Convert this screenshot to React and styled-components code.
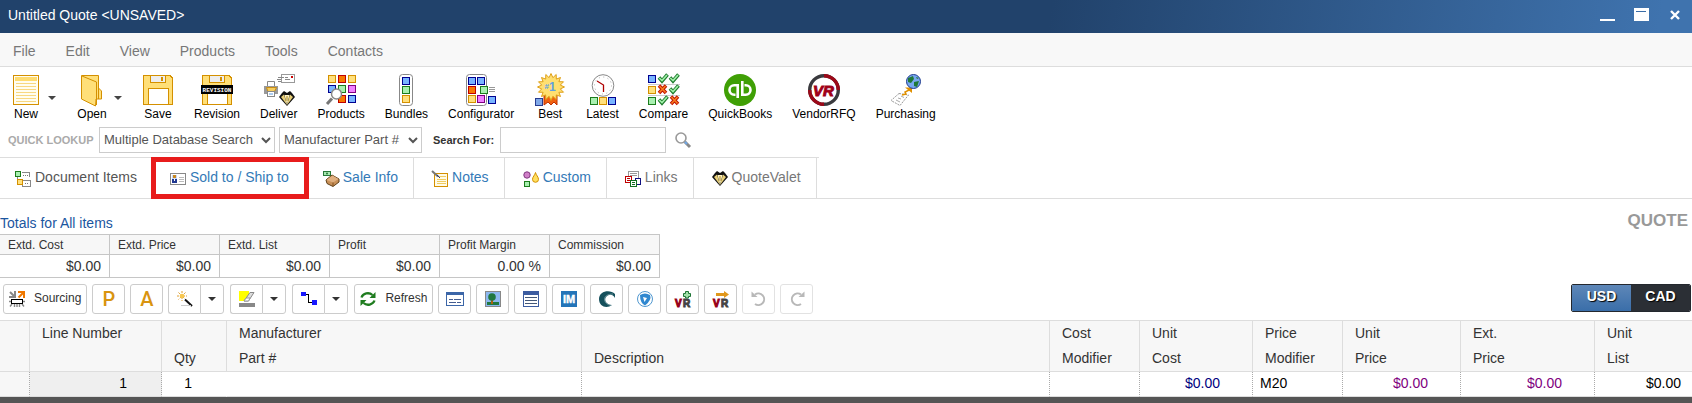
import React from "react";
import styled, { createGlobalStyle, css } from "styled-components";

const GlobalStyle = createGlobalStyle`
  * { box-sizing: border-box; }
  body {
    margin: 0;
    background: #fff;
    color: #333;
    font-family: "Liberation Sans", Arial, sans-serif;
    font-size: 14px;
    overflow-x: hidden;
  }
  button, input, select { font-family: inherit; }
  svg { display: block; flex: none; overflow: visible; }
`;

/* ---------- layout ---------- */

const plainButton = css`
  border: 0;
  padding: 0;
  margin: 0;
  background: none;
  color: inherit;
  cursor: pointer;
`;

const TitleBar = styled.header`
  display: flex;
  align-items: center;
  justify-content: space-between;
  height: 33px;
  padding: 0 10px 4px 8px;
  color: #fff;
  background: linear-gradient(100deg, #21426b 62%, #3f73ae 98%);
`;

const Title = styled.h1`
  margin: 0;
  font-size: 14px;
  font-weight: 400;
  line-height: 20px;
`;

const WindowControls = styled.div`
  display: flex;
  gap: 18px;
`;

const WindowButton = styled.button`
  ${plainButton}
  display: block;
`;

const MenuBar = styled.nav`
  display: flex;
  gap: 30px;
  height: 34px;
  padding: 0 13px;
  background: #f8f8f8;
  border-bottom: 1px solid #ddd;
`;

const MenuItem = styled.button`
  ${plainButton}
  padding-top: 2px;
  color: #777;
  font-size: 14px;
  line-height: 20px;
`;

const Toolbar = styled.div`
  display: flex;
  gap: 20px;
  padding: 7px 10px 0;
`;

const ToolGroup = styled.div`
  display: flex;
  align-items: center;
`;

const ToolButton = styled.button`
  ${plainButton}
  display: flex;
  flex-direction: column;
  align-items: center;
  color: #000;
  font-size: 12px;
  line-height: 16px;
`;

const CaretButton = styled.button`
  ${plainButton}
  padding: 0 0 0 6px;
`;

const LookupBar = styled.form`
  display: flex;
  align-items: center;
  padding: 5px 8px 4px;
`;

const LookupTitle = styled.span`
  width: 91px;
  color: #aaa;
  font-size: 11px;
  font-weight: 700;
  white-space: nowrap;
`;

const Select = styled.select`
  width: ${(p) => p.$width}px;
  height: 26px;
  margin-right: 4px;
  padding: 0 0 2px;
  border: 1px solid #ccc;
  border-radius: 0;
  background-color: #fff;
  color: #555;
  font-size: 13px;
`;

const SearchLabel = styled.label`
  margin: 0 6px 0 7px;
  color: #333;
  font-size: 11px;
  font-weight: 700;
`;

const SearchInput = styled.input`
  width: 166px;
  height: 26px;
  border: 1px solid #ccc;
  font-size: 13px;
`;

const SearchButton = styled.button`
  ${plainButton}
  margin-left: 9px;
`;

const TabStrip = styled.div`
  border-bottom: 1px solid #ddd;
`;

const TabList = styled.div`
  display: inline-flex;
  vertical-align: top;
  padding-right: 2px;
  border-top: 1px solid #ddd;
`;

const Tab = styled.button`
  ${plainButton}
  position: relative;
  display: flex;
  align-items: flex-end;
  gap: 4px;
  padding: 9px ${(p) => (p.$first ? 14 : 15)}px 11px ${(p) => (p.$first ? 15 : 18)}px;
  border-right: 1px solid #ddd;
  color: ${(p) => p.$color};
  font-size: 14px;
  line-height: 20px;
  ${(p) =>
    p.$marked &&
    css`
      &::after {
        content: "";
        position: absolute;
        inset: -1px -5px -1px -1px;
        border: 5px solid #e81c1c;
        z-index: 1;
      }
    `}
`;

const Summary = styled.section`
  display: flex;
  justify-content: space-between;
  align-items: flex-start;
  padding-right: 4px;
`;

const TotalsTitle = styled.h2`
  margin: 0;
  padding: 14px 0 1px;
  color: #1b569f;
  font-size: 14px;
  font-weight: 400;
  line-height: 20px;
`;

const DocumentType = styled.strong`
  padding-top: 12px;
  color: #999;
  font-size: 17px;
  line-height: 20px;
`;

const TotalsTable = styled.table`
  border-collapse: separate;
  border-spacing: 0;
  border-top: 1px solid #c6c6c6;
  th, td {
    width: 110px;
    border-right: 1px solid #c6c6c6;
    border-bottom: 1px solid #c6c6c6;
  }
  th {
    padding: 0 8px;
    height: 20px;
    background: #f7f7f7;
    text-align: left;
    font-size: 12px;
    font-weight: 400;
  }
  td {
    padding: 0 8px;
    height: 23px;
    text-align: right;
  }
`;

const ActionBar = styled.div`
  display: flex;
  justify-content: space-between;
  padding: 6px 1px 6px 3px;
`;

const Actions = styled.div`
  display: flex;
  gap: 5px;
`;

const ActionButton = styled.button`
  display: flex;
  align-items: center;
  justify-content: center;
  gap: ${(p) => (p.$labelled ? 9 : 0)}px;
  min-width: 33px;
  height: 30px;
  padding: 0 5px;
  border: 1px solid #ccc;
  border-radius: 3px;
  background: #fff;
  color: #333;
  font-size: 12px;
  line-height: 16px;
  cursor: pointer;
  &:disabled { border-color: #e2e2e2; cursor: default; }
`;

const ActionLabel = styled.span`
  padding-bottom: 2px;
`;

const LetterIcon = styled.span`
  color: #d9940f;
  font: 500 20px/20px Roboto, sans-serif;
`;

const SplitButton = styled.div`
  display: flex;
  margin-right: 1px;
  ${ActionButton}:first-child { border-radius: 3px 0 0 3px; border-right: 0; min-width: 32px; }
  ${ActionButton}:last-child { border-radius: 0 3px 3px 0; min-width: 24px; }
`;

const CurrencySwitch = styled.div`
  display: flex;
  width: 120px;
  height: 28px;
  border: 1px solid #24282e;
  border-radius: 2px;
  overflow: hidden;
`;

const CurrencyButton = styled.button`
  ${plainButton}
  flex: 1;
  padding-bottom: 4px;
  background: ${(p) => (p.$active ? "linear-gradient(#5e87b8, #3a6ea9)" : "#2b2f35")};
  color: #fff;
  font-size: 14px;
  font-weight: 700;
  text-shadow: 1px 1px 1px #000;
`;

const ItemsTable = styled.table`
  width: 100%;
  table-layout: fixed;
  border-collapse: separate;
  border-spacing: 0;
  border-top: 1px solid #ddd;
`;

const HeadCell = styled.th`
  height: 50px;
  padding: 0 12px;
  vertical-align: bottom;
  border-right: 1px solid #ddd;
  border-bottom: 1px solid #ddd;
  background: #f7f7f7;
  text-align: left;
  font-weight: 400;
  line-height: 25px;
  white-space: nowrap;
  ${(p) => p.$top && "vertical-align: top;"}
  &:last-child { border-right: 0; }
`;

const Cell = styled.td`
  height: 25px;
  padding: 0 ${(p) => p.$pad ?? 32}px 2px 7px;
  border-right: 1px ${(p) => (p.$open ? "solid transparent" : "dotted #aaa")};
  border-bottom: 1px solid #ddd;
  background: ${(p) => p.$bg || "#fff"};
  color: ${(p) => p.$color || "#000"};
  text-align: ${(p) => (p.$left ? "left" : "right")};
  line-height: 20px;
  &:last-child { border-right: 0; }
`;

const Footer = styled.footer`
  height: 7px;
  background: #555;
`;

/* ---------- icons ---------- */

const Svg = ({ w = 32, h = w, crisp = true, children }) => (
  <svg
    width={w}
    height={h}
    viewBox={`0 0 ${w} ${h}`}
    shapeRendering={crisp ? "crispEdges" : "auto"}
    aria-hidden="true"
  >
    {children}
  </svg>
);

const TONES = {
  yellow: ["#d49000", "#ffe07c"],
  orange: ["#c00000", "#f87800"],
  blue: ["#000090", "#78b4ff"],
  green: ["#1c7c1c", "#a8f0b0"],
  pink: ["#800080", "#f080ff"],
};

const Square = ({ x, y, tone, s = 8 }) => (
  <g shapeRendering="crispEdges">
    <rect x={x} y={y} width={s} height={s} fill={TONES[tone][0]} />
    <rect x={x + 1} y={y + 1} width={s - 2} height={s - 2} fill={TONES[tone][1]} />
  </g>
);

const Caret = ({ color = "#444" }) => (
  <Svg w={8} h={4} crisp={false}>
    <path d="M0 0H8L4 4Z" fill={color} />
  </Svg>
);

const NewIcon = () => (
  <Svg>
    <rect x="3.5" y="1.5" width="25" height="29" fill="#fffdf0" stroke="#d49000" />
    <path d="M5 3h22v4H5z" fill="#ffdc70" />
    <path d="M6 9.5h20M6 12.5h20M6 15.5h20M6 18.5h20M6 21.5h20M6 24.5h20M6 27.5h20" stroke="#f8d880" />
  </Svg>
);

const OpenIcon = () => (
  <Svg crisp={false}>
    <path d="M5.5 1.5H22.5V14L25.5 17V25H20L19.5 32L5.5 25Z" fill="#ffdf78" stroke="#d49000" />
    <path d="M6 2L20.500 8V31" fill="none" stroke="#d49000" />
    <path d="M22.500 14V25" stroke="#d49000" />
  </Svg>
);

const Floppy = () => (
  <>
    <path d="M1.500 1.500H28L30.500 4V30.500H1.500Z" fill="#ffdf78" stroke="#d49000" />
    <rect x="8.500" y="1.500" width="15" height="7" fill="#eee" stroke="#d49000" />
    <rect x="19" y="3" width="2" height="4" fill="#d49000" />
    <rect x="6.500" y="14.500" width="20" height="16" fill="#fff" stroke="#d49000" />
  </>
);

const SaveIcon = () => <Svg><Floppy /></Svg>;

const RevisionIcon = () => (
  <Svg>
    <Floppy />
    <rect x="0" y="11" width="32" height="9" fill="#000" />
    <text x="16" y="18" fill="#fff" fontSize="6" fontWeight="700" textAnchor="middle" fontFamily="Liberation Mono, monospace">REVISION</text>
  </Svg>
);

const Tuxedo = () => (
  <g>
    <path d="M0 6L3 2L5 0L8 2L11 0L13 2L16 6L8 15Z" fill="#111" />
    <path d="M2 6L5 3.500L8 14Z M14 6L11 3.500L8 14Z" fill="#e8cf78" />
    <path d="M5.500 4H10.500L8 14Z" fill="#fff3c0" />
    <path d="M7.500 5H8.500V10H7.500Z" fill="#a88620" />
  </g>
);

const DeliverIcon = () => (
  <Svg crisp={false}>
    <path d="M4.500 13V7.500H11.500V13" fill="#fff" stroke="#888" />
    <path d="M1 12H15V20H1Z" fill="#999" />
    <path d="M3.500 13.500H13.500L11.500 17.500H5Z" fill="#f5cc5c" stroke="#c98d14" />
    <rect x="4.500" y="17.500" width="7" height="5" fill="#fff" stroke="#888" />
    <path d="M6 20H10" stroke="#5b9be0" />
    <rect x="18.500" y="0.500" width="13" height="8" fill="#fff" stroke="#999" />
    <path d="M15 3.500H21M14 5.500H18M15 7.500H18M22 5.500H27M22 3.500H25" stroke="#888" />
    <rect x="28" y="2" width="2" height="2" fill="#c00" />
    <g transform="translate(16 17)"><Tuxedo /></g>
  </Svg>
);

const ProductsIcon = () => (
  <Svg>
    <Square x={3} y={1} tone="yellow" />
    <Square x={13} y={1} tone="orange" />
    <Square x={23} y={1} tone="yellow" />
    <Square x={3} y={11} tone="blue" />
    <Square x={13} y={11} tone="green" />
    <Square x={23} y={11} tone="pink" />
    <Square x={13} y={21} tone="orange" />
    <Square x={23} y={21} tone="blue" />
    <g shapeRendering="auto">
      <path d="M7 24.500L2 30" stroke="#777" strokeWidth="3" />
      <circle cx="11.500" cy="20" r="5" fill="#fff" stroke="#888" strokeWidth="1.500" />
    </g>
  </Svg>
);

const BundlesIcon = () => (
  <Svg>
    <rect x="9.500" y="0.500" width="13" height="31" rx="3" fill="#fff" stroke="#888" shapeRendering="auto" />
    <Square x={12} y={3} tone="blue" />
    <Square x={12} y={12} tone="green" />
    <Square x={12} y={21} tone="yellow" />
  </Svg>
);

const ConfiguratorIcon = () => (
  <Svg>
    <rect x="1.500" y="0.500" width="20" height="31" rx="3" fill="#fff" stroke="#888" shapeRendering="auto" />
    <Square x={3} y={3} tone="blue" />
    <Square x={12} y={3} tone="blue" />
    <Square x={3} y={12} tone="orange" />
    <Square x={15} y={12} tone="green" />
    <path d="M24 13.500H30M24 15.500H30M24 17.500H30" stroke="#999" />
    <Square x={3} y={21} tone="yellow" />
    <Square x={12} y={21} tone="pink" />
    <Square x={23} y={22} tone="blue" />
  </Svg>
);

const starPoints = Array.from({ length: 32 }, (_, i) => {
  const r = i % 2 ? 9.5 : 13.5;
  const a = (i * Math.PI) / 16;
  return `${(17 + r * Math.sin(a)).toFixed(1)},${(13 - r * Math.cos(a)).toFixed(1)}`;
}).join(" ");

const BestIcon = () => (
  <Svg crisp={false}>
    <path d="M10 20H23V31L20 28L17 31L14 28L10 31Z" fill="#f06010" stroke="#c03000" />
    <polygon points={starPoints} fill="#ffdf70" stroke="#dfa018" />
    <text x="16" y="17" fill="#60a0e0" fontSize="12" fontWeight="700" textAnchor="middle">
      <tspan fontSize="8" dy="-2">#</tspan>
      <tspan dy="2">1</tspan>
    </text>
    <rect x="1.500" y="24.500" width="7" height="7" fill="#80a8e8" stroke="#283c90" />
  </Svg>
);

const LatestIcon = () => (
  <Svg crisp={false}>
    <circle cx="16" cy="11.500" r="10.800" fill="#fff" stroke="#888" />
    <circle cx="16" cy="11.500" r="8.500" fill="none" stroke="#aaa" strokeDasharray="1 3.450" />
    <path d="M10 7L16.500 11V18" fill="none" stroke="#b00000" strokeWidth="1.300" />
    <Square x={3} y={23} tone="green" />
    <Square x={12} y={23} tone="yellow" />
    <Square x={21} y={23} tone="blue" />
  </Svg>
);

const Check = ({ x, y }) => (
  <g transform={`translate(${x} ${y})`} fill="none">
    <path d="M1 3.500L4 7L9.500 0.500" stroke="#1e7a2c" strokeWidth="3.500" />
    <path d="M1.300 4L4 6.500L9 1" stroke="#a0f0a8" strokeWidth="1.700" />
  </g>
);

const Cross = ({ x, y }) => (
  <g transform={`translate(${x} ${y})`}>
    <path d="M1 0.500L8 8M8 0.500L1 8" stroke="#c01000" strokeWidth="3.500" />
    <path d="M1.500 1L7.500 7.500M7.500 1L1.500 7.500" stroke="#f88020" strokeWidth="1.500" />
  </g>
);

const CompareIcon = () => (
  <Svg crisp={false}>
    <Square x={0} y={1} tone="blue" />
    <Square x={0} y={12} tone="yellow" />
    <Square x={0} y={23} tone="green" />
    <path d="M0 10.500H32M0 21.500H32" stroke="#ccc" />
    <Check x={10} y={0} />
    <Check x={21} y={0} />
    <Cross x={10} y={11} />
    <Check x={21} y={11} />
    <Check x={10} y={22} />
    <Cross x={22} y={22} />
  </Svg>
);

const QuickBooksIcon = () => (
  <Svg crisp={false}>
    <circle cx="16" cy="16" r="16" fill="#3f9f05" />
    <g fill="none" stroke="#fff" strokeWidth="2.600">
      <path d="M13.700 24V11.300H10.200A4.700 4.700 0 0 0 10.200 20.700H11.500" />
      <path d="M18.300 7V20.700H21.800A4.700 4.700 0 0 0 21.800 11.300H20.500" />
    </g>
  </Svg>
);

const VendorIcon = () => (
  <Svg crisp={false}>
    <circle cx="16" cy="16" r="14.300" fill="#fff" stroke="#3a3a3e" strokeWidth="3.400" />
    <path d="M16 1.700A14.300 14.300 0 0 1 30.300 16M16 30.300A14.300 14.300 0 0 1 1.700 16" fill="none" stroke="#9c0818" strokeWidth="3.400" />
    <text x="15.500" y="21.500" fill="#a00018" stroke="#a00018" strokeWidth="1" fontSize="15" fontWeight="700" fontStyle="italic" textAnchor="middle">VR</text>
  </Svg>
);

const PurchasingIcon = () => (
  <Svg crisp={false}>
    <path d="M9 19.500L18.500 21L10 31.500L1 26.500Z" fill="#fff" stroke="#999" strokeDasharray="2 1" />
    <path d="M8 24L11 25M11 22L14 23.500M6 26L10 28" stroke="#aaa" />
    <path d="M12 21L16 20L15 18L21 15" fill="none" stroke="#e09000" strokeWidth="1.500" />
    <path d="M15 13.500H22V19Z" fill="#e09000" />
    <circle cx="23.500" cy="7.500" r="7" fill="#78a8f0" stroke="#203c90" />
    <path d="M18 4L23 2L24 5L21 9L18 8ZM24 8L29 7L27 13L24 12ZM26 3L29 4L27 5Z" fill="#207838" />
  </Svg>
);

const SearchIcon = () => (
  <Svg w={16} crisp={false}>
    <path d="M9.500 9.500L15 15" stroke="#888" strokeWidth="3" />
    <path d="M9 9L12 12" stroke="#70a8e8" strokeWidth="2" />
    <circle cx="6" cy="6" r="5" fill="#fff" stroke="#999" strokeWidth="1.600" />
  </Svg>
);

const DocumentIcon = () => (
  <Svg w={16}>
    <path d="M6.500 1.500H14.500V6M6 5.500H2.500V12" fill="none" stroke="#888" />
    <rect x="7.500" y="9.500" width="8" height="6" fill="#fff" stroke="#888" />
    <path d="M8 4.500H9M10 4.500H11M12 4.500H13M10 12.500H11M12 12.500H13" stroke="#777" />
    <Square x={0} y={0} s={6} tone="green" />
    <Square x={2} y={8} s={6} tone="yellow" />
  </Svg>
);

const CardIcon = () => (
  <Svg w={16}>
    <rect x="0.500" y="2.500" width="15" height="11" fill="#fff" stroke="#888" />
    <rect x="2" y="4" width="5" height="8" fill="#c8d8f8" />
    <rect x="3" y="4" width="3" height="3" fill="#c88820" />
    <rect x="2" y="8" width="5" height="4" fill="#203890" />
    <rect x="4" y="8" width="1" height="2" fill="#fff" />
    <path d="M9 6.500H14M9 8.500H14M9 10.500H14" stroke="#bbb" />
  </Svg>
);

const SaleIcon = () => (
  <Svg w={16} crisp={false}>
    <rect x="0.500" y="0.500" width="7" height="4" fill="#a8e8b0" stroke="#287838" />
    <circle cx="4" cy="2.500" r="1" fill="#287838" />
    <path d="M3 9L9 4L16 8V11L10 15.500L4 12.500Z" fill="#c89058" stroke="#604018" />
    <path d="M3.500 9L9.500 4.500L15.500 8L10 11.500Z" fill="#e0b080" />
    <path d="M10 11.500V15" stroke="#805020" />
  </Svg>
);

const NotesIcon = () => (
  <Svg w={16}>
    <rect x="2.500" y="2.500" width="13" height="13" fill="#fffbe8" stroke="#d49000" />
    <path d="M6 5.500H14M5 8.500H14M5 10.500H14M5 12.500H14" stroke="#f0cc60" />
    <path d="M0 0L6 5.500" stroke="#777" strokeWidth="2" shapeRendering="auto" />
    <path d="M5 4L8 7" stroke="#203080" shapeRendering="auto" />
  </Svg>
);

const CustomIcon = () => (
  <Svg w={16} crisp={false}>
    <circle cx="4" cy="4" r="3.200" fill="#d080c8" stroke="#803880" />
    <path d="M12.500 1.500C13 4 15.500 6 15.500 8.300A3 3 0 0 1 9.500 8.300C9.500 6 12 4 12.500 1.500Z" fill="#ffdf60" stroke="#d49000" />
    <Square x={1} y={10} s={6} tone="green" />
  </Svg>
);

const LinksIcon = () => (
  <Svg w={16}>
    <rect x="3.500" y="0.500" width="10" height="11" fill="#fff" stroke="#999" />
    <path d="M5 2.500H12M5 4.500H12" stroke="#999" />
    <rect x="0.500" y="5.500" width="6" height="6" fill="#fff" stroke="#c00000" />
    <path d="M2 7.500H5M2 9.500H5" stroke="#c00000" />
    <rect x="10.500" y="7.500" width="5" height="6" fill="#fff" stroke="#101080" />
    <rect x="5.500" y="9.500" width="6" height="6" fill="#fff" stroke="#107020" />
    <path d="M7 11.500H10M7 13.500H10" stroke="#107020" />
  </Svg>
);

const ValetIcon = () => (
  <Svg w={16} crisp={false}><Tuxedo /></Svg>
);

const SourcingIcon = () => (
  <Svg w={16} crisp={false}>
    <path d="M1 1L5.500 5.500M6 0V6H0" fill="none" stroke="#888" strokeWidth="2" />
    <path d="M9.500 6.500L14 2M9 1H15V7" fill="none" stroke="#f07800" strokeWidth="2" />
    <path d="M0 10.500H2M14 10.500H16M3 13L1 15.500M13 13L15 15.500M5.500 13V16M8 13V16M10.500 13V16" stroke="#888" strokeWidth="1.400" />
    <rect x="2.500" y="8.500" width="11" height="4" fill="#fff" stroke="#000" />
  </Svg>
);

const WandIcon = () => (
  <Svg w={16} crisp={false}>
    <path d="M5 0V10M0 5H10M1.500 1.500L8.500 8.500M8.500 1.500L1.500 8.500" stroke="#e0a030" strokeDasharray="2 1" />
    <circle cx="5" cy="5" r="2.300" fill="#f8c850" />
    <path d="M8 8.500L15 15" stroke="#111" strokeWidth="2" />
    <path d="M4 14.500H14" stroke="#ccc" />
  </Svg>
);

const HighlightIcon = () => (
  <Svg w={16} crisp={false}>
    <path d="M0 0H10V10H0Z" fill="#ffff00" />
    <path d="M5 10L11 1.500H15L9.500 10Z" fill="#ddd" stroke="#888" />
    <path d="M5 10L7 7H11L9.500 10Z" fill="#fff" stroke="#999" />
    <rect y="12" width="16" height="4" fill="#888" />
  </Svg>
);

const ConnectIcon = () => (
  <Svg w={16}>
    <path d="M4 3.500H7.500V11.500H12" fill="none" stroke="#000" />
    <rect x="0" y="1" width="5" height="4" fill="#1818ff" />
    <rect x="11" y="9" width="5" height="5" fill="#1818ff" />
  </Svg>
);

const RefreshIcon = () => (
  <Svg w={16} crisp={false}>
    <g fill="none" stroke="#1f7c1f" strokeWidth="2.300">
      <path d="M1.500 6.500A6.600 5.800 0 0 1 12.500 4" />
      <path d="M14.500 9.500A6.600 5.800 0 0 1 3.500 12" />
    </g>
    <path d="M15.500 1V7H9.500ZM0.500 15V9H6.500Z" fill="#1f7c1f" />
  </Svg>
);

const FormIcon = () => (
  <Svg w={18} h={14}>
    <rect x="0.500" y="0.500" width="17" height="13" fill="#fff" stroke="#3c66a8" />
    <rect x="0" y="0" width="18" height="3" fill="#3c66a8" />
    <path d="M3 7.500H7M8 7.500H15M3 10.500H10M11 10.500H15" stroke="#445c90" />
  </Svg>
);

const PictureIcon = () => (
  <Svg w={16}>
    <rect x="0.500" y="0.500" width="15" height="15" fill="#8cb8f0" stroke="#888" />
    <rect x="2" y="11" width="12" height="3" fill="#207840" />
    <path d="M6 9H8V13H6Z" fill="#b06010" />
    <circle cx="7" cy="6" r="3.800" fill="#207840" shapeRendering="auto" />
  </Svg>
);

const ListIcon = () => (
  <Svg w={16}>
    <rect x="0.500" y="0.500" width="15" height="15" fill="#fff" stroke="#3c5ca0" />
    <rect width="16" height="4" fill="#3c5ca0" />
    <path d="M2 6.500H14M2 9.500H14M2 12.500H14" stroke="#445878" strokeWidth="1" />
  </Svg>
);

const ImIcon = () => (
  <Svg w={16} crisp={false}>
    <rect width="16" height="16" fill="#2374b8" />
    <text x="8" y="12" fill="#fff" stroke="#fff" strokeWidth="0.400" fontSize="11" fontWeight="700" textAnchor="middle">IM</text>
  </Svg>
);

const SwirlIcon = () => (
  <Svg w={16} crisp={false}>
    <path d="M16 3C11 -2 0 0 0 8C0 16 8 18 13 14C7 14 4 8 8 5C11 3 14 3.500 16 7Z" fill="#15505c" />
    <path d="M14 3C9 3 5 5 5.500 9C6 12 9 14 12 14.500" fill="none" stroke="#88aab0" strokeWidth="0.700" />
  </Svg>
);

const RadarIcon = () => (
  <Svg w={16} crisp={false}>
    <circle cx="8" cy="8" r="7.500" fill="#fff" stroke="#5098d0" />
    <path d="M3 4Q8 1 13 4Q15 9 8 14.500Q3 12 3 4Z" fill="#3088d0" />
    <path d="M6 6L10 7L7.500 11Z" fill="#fff" />
  </Svg>
);

const VrText = () => (
  <text y="16" fontSize="10" fontWeight="700" strokeWidth="1">
    <tspan x="0" fill="#980018" stroke="#980018">V</tspan>
    <tspan x="8" fill="#444" stroke="#444">R</tspan>
  </text>
);

const VrAddIcon = () => (
  <Svg w={16} crisp={false}>
    <VrText />
    <path d="M10.500 0.500H13.500V2.500H15.500V5.500H13.500V7H10.500V5.500H8.500V2.500H10.500Z" fill="#a0e0a8" stroke="#1c7434" />
  </Svg>
);

const VrSendIcon = () => (
  <Svg w={16} crisp={false}>
    <VrText />
    <path d="M3 2H11V0L16 3.500L11 7V5H3Z" fill="#e0981c" />
  </Svg>
);

const UndoIcon = ({ flip }) => (
  <Svg w={16} crisp={false}>
    <g transform={flip ? "translate(16 0) scale(-1 1)" : undefined}>
      <path d="M4 3.500A5.800 5.800 0 1 1 4 13" fill="none" stroke="#b8b8b8" strokeWidth="2" />
      <path d="M0.500 0.500V6H6.500Z" fill="#b8b8b8" />
    </g>
  </Svg>
);

/* ---------- data ---------- */

const menus = ["File", "Edit", "View", "Products", "Tools", "Contacts"];

const tools = [
  ["New", NewIcon, true],
  ["Open", OpenIcon, true],
  ["Save", SaveIcon],
  ["Revision", RevisionIcon],
  ["Deliver", DeliverIcon],
  ["Products", ProductsIcon],
  ["Bundles", BundlesIcon],
  ["Configurator", ConfiguratorIcon],
  ["Best", BestIcon],
  ["Latest", LatestIcon],
  ["Compare", CompareIcon],
  ["QuickBooks", QuickBooksIcon],
  ["VendorRFQ", VendorIcon],
  ["Purchasing", PurchasingIcon],
];

const tabs = [
  ["Document Items", DocumentIcon, "#555"],
  ["Sold to / Ship to", CardIcon, "#337ab7"],
  ["Sale Info", SaleIcon, "#337ab7"],
  ["Notes", NotesIcon, "#337ab7"],
  ["Custom", CustomIcon, "#337ab7"],
  ["Links", LinksIcon, "#777"],
  ["QuoteValet", ValetIcon, "#777"],
];

const totals = [
  ["Extd. Cost", "$0.00"],
  ["Extd. Price", "$0.00"],
  ["Extd. List", "$0.00"],
  ["Profit", "$0.00"],
  ["Profit Margin", "0.00 %"],
  ["Commission", "$0.00"],
];

const columnWidths = [30, 132, 65, 355, null, 90, 113, 90, 118, 134, 97];

const iconActions = [
  ["Form view", FormIcon],
  ["Picture", PictureIcon],
  ["List", ListIcon],
  ["Ingram Micro", ImIcon],
  ["Synnex", SwirlIcon],
  ["Tech Data", RadarIcon],
  ["Add to VendorRFQ", VrAddIcon],
  ["Send to VendorRFQ", VrSendIcon],
];

const SplitAction = ({ label, icon: Icon }) => (
  <SplitButton>
    <ActionButton type="button" aria-label={label}><Icon /></ActionButton>
    <ActionButton type="button" aria-label={`${label} options`}><Caret color="#333" /></ActionButton>
  </SplitButton>
);

export default function App() {
  return (
    <>
      <GlobalStyle />
      <TitleBar>
        <Title>Untitled Quote &lt;UNSAVED&gt;</Title>
        <WindowControls>
          <WindowButton type="button" aria-label="Minimize">
            <Svg w={16} h={14}><path d="M0 11h15v2H0z" fill="#fff" /></Svg>
          </WindowButton>
          <WindowButton type="button" aria-label="Maximize">
            <Svg w={16} h={14}>
              <rect width="15" height="13" fill="#fff" />
              <path d="M2 3.500H12" stroke="#3a6ca6" />
            </Svg>
          </WindowButton>
          <WindowButton type="button" aria-label="Close">
            <Svg w={14} h={14} crisp={false}><path d="M3 3L11 11M11 3L3 11" stroke="#fff" strokeWidth="2.400" /></Svg>
          </WindowButton>
        </WindowControls>
      </TitleBar>

      <MenuBar>
        {menus.map((name) => <MenuItem type="button" key={name}>{name}</MenuItem>)}
      </MenuBar>

      <Toolbar>
        {tools.map(([name, Icon, hasMenu]) => (
          <ToolGroup key={name}>
            <ToolButton type="button"><Icon />{name}</ToolButton>
            {hasMenu && <CaretButton type="button" aria-label={`${name} options`}><Caret /></CaretButton>}
          </ToolGroup>
        ))}
      </Toolbar>

      <LookupBar onSubmit={(e) => e.preventDefault()}>
        <LookupTitle>QUICK LOOKUP</LookupTitle>
        <Select $width={176} aria-label="Search source"><option>Multiple Database Search</option></Select>
        <Select $width={143} aria-label="Search field"><option>Manufacturer Part #</option></Select>
        <SearchLabel htmlFor="search-for">Search For:</SearchLabel>
        <SearchInput id="search-for" type="text" />
        <SearchButton type="submit" aria-label="Search"><SearchIcon /></SearchButton>
      </LookupBar>

      <TabStrip>
        <TabList role="tablist">
          {tabs.map(([name, Icon, color], i) => (
            <Tab type="button" role="tab" aria-selected={i === 0} key={name} $color={color} $first={i === 0} $marked={i === 1}>
              <Icon />{name}
            </Tab>
          ))}
        </TabList>
      </TabStrip>

      <Summary>
        <div>
          <TotalsTitle>Totals for All items</TotalsTitle>
          <TotalsTable>
            <thead><tr>{totals.map(([name]) => <th scope="col" key={name}>{name}</th>)}</tr></thead>
            <tbody><tr>{totals.map(([name, value]) => <td key={name}>{value}</td>)}</tr></tbody>
          </TotalsTable>
        </div>
        <DocumentType>QUOTE</DocumentType>
      </Summary>

      <ActionBar>
        <Actions>
          <ActionButton type="button" $labelled><SourcingIcon /><ActionLabel>Sourcing</ActionLabel></ActionButton>
          <ActionButton type="button"><LetterIcon>P</LetterIcon></ActionButton>
          <ActionButton type="button"><LetterIcon>A</LetterIcon></ActionButton>
          <SplitAction label="Wizard" icon={WandIcon} />
          <SplitAction label="Highlight" icon={HighlightIcon} />
          <SplitAction label="Connect" icon={ConnectIcon} />
          <ActionButton type="button" $labelled><RefreshIcon /><ActionLabel>Refresh</ActionLabel></ActionButton>
          {iconActions.map(([label, Icon]) => (
            <ActionButton type="button" aria-label={label} key={label}><Icon /></ActionButton>
          ))}
          <ActionButton type="button" aria-label="Undo" disabled><UndoIcon /></ActionButton>
          <ActionButton type="button" aria-label="Redo" disabled><UndoIcon flip /></ActionButton>
        </Actions>
        <CurrencySwitch>
          <CurrencyButton type="button" aria-pressed="true" $active>USD</CurrencyButton>
          <CurrencyButton type="button" aria-pressed="false">CAD</CurrencyButton>
        </CurrencySwitch>
      </ActionBar>

      <ItemsTable>
        <colgroup>
          {columnWidths.map((w, i) => <col key={i} width={w ?? undefined} />)}
        </colgroup>
        <thead>
          <tr>
            <HeadCell />
            <HeadCell scope="col" $top>Line Number</HeadCell>
            <HeadCell scope="col">Qty</HeadCell>
            <HeadCell scope="col">Manufacturer<br />Part #</HeadCell>
            <HeadCell scope="col">Description</HeadCell>
            <HeadCell scope="col">Cost<br />Modifier</HeadCell>
            <HeadCell scope="col">Unit<br />Cost</HeadCell>
            <HeadCell scope="col">Price<br />Modifier</HeadCell>
            <HeadCell scope="col">Unit<br />Price</HeadCell>
            <HeadCell scope="col">Ext.<br />Price</HeadCell>
            <HeadCell scope="col">Unit<br />List</HeadCell>
          </tr>
        </thead>
        <tbody>
          <tr>
            <Cell $bg="#f7f7f7" $pad={0} />
            <Cell $bg="#efefef" $pad={34}>1</Cell>
            <Cell $pad={34} $open>1</Cell>
            <Cell />
            <Cell />
            <Cell />
            <Cell $color="#000080">$0.00</Cell>
            <Cell $left $pad={0}>M20</Cell>
            <Cell $color="#800080">$0.00</Cell>
            <Cell $color="#800080">$0.00</Cell>
            <Cell $pad={11}>$0.00</Cell>
          </tr>
        </tbody>
      </ItemsTable>
      <Footer />
    </>
  );
}
